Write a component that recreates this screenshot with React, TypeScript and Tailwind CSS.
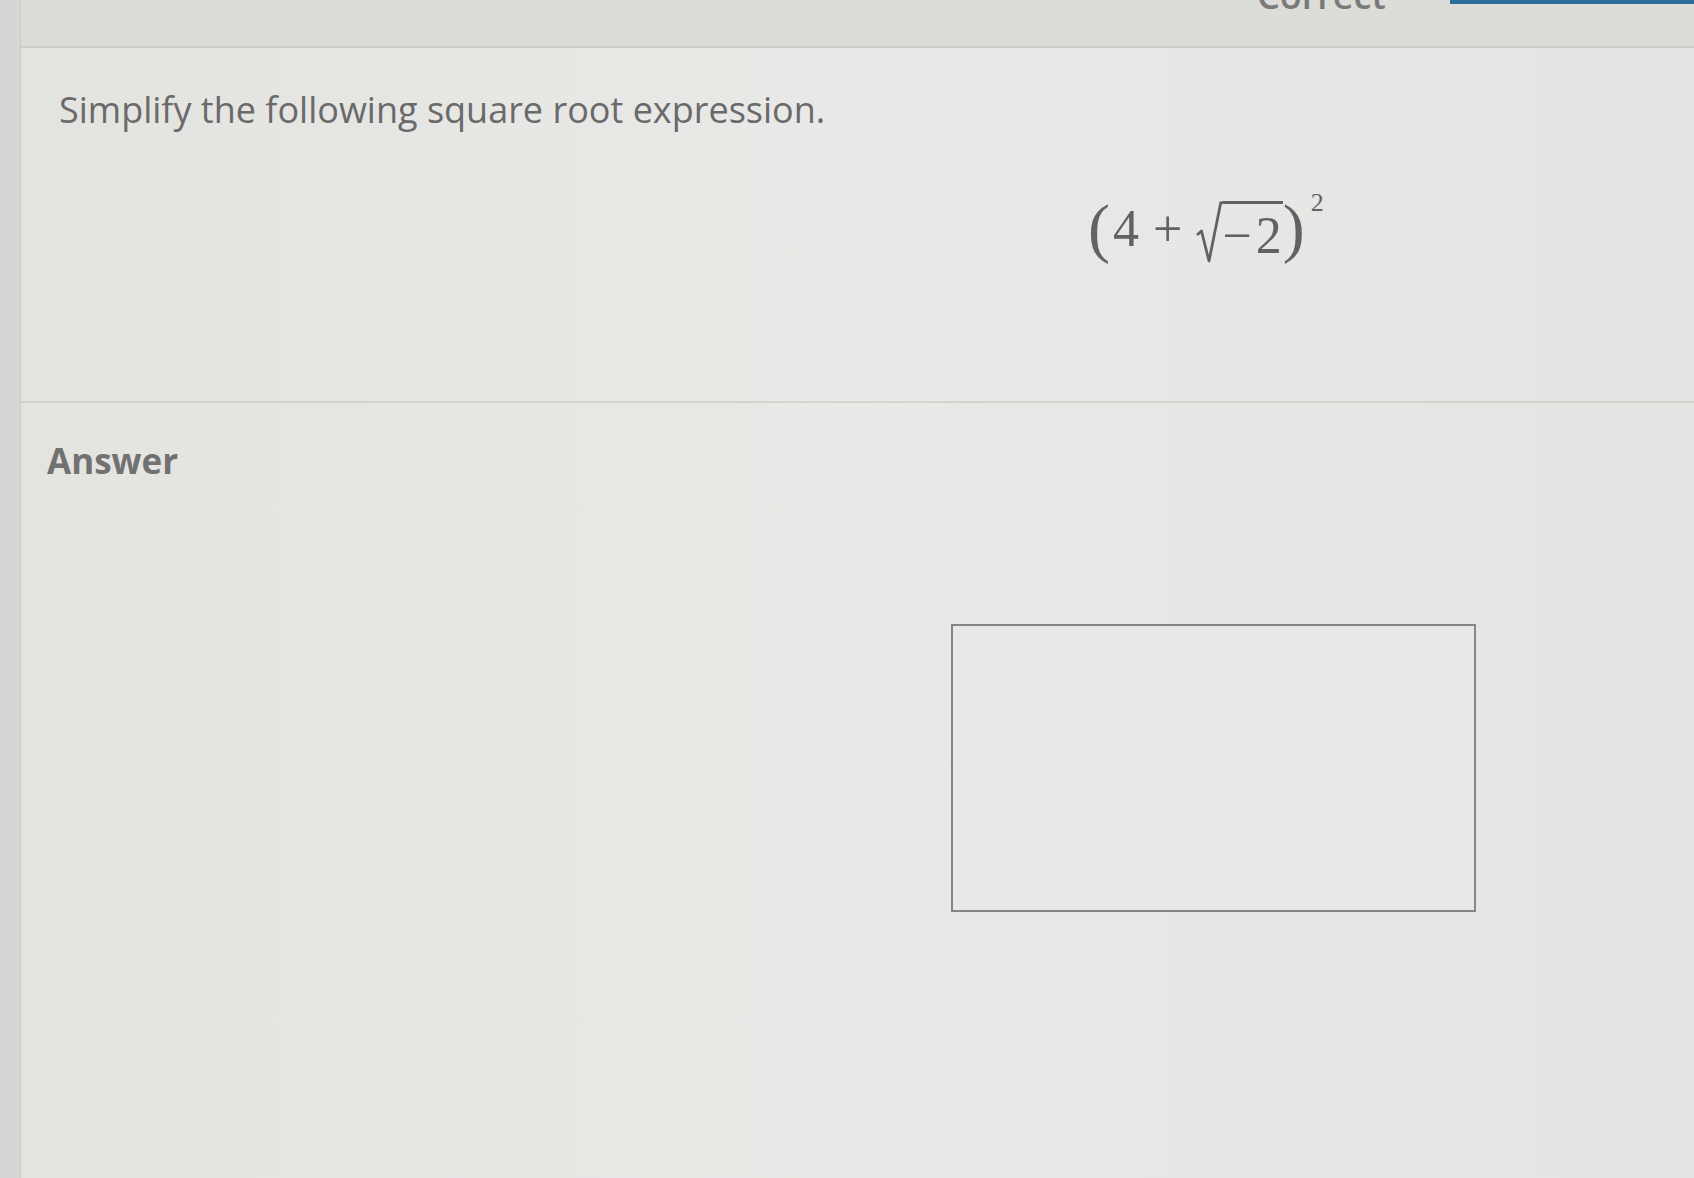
import { type FC } from 'react';

const SANS = { fontFamily: '"Open Sans", "Noto Sans", sans-serif' };
const SERIF = { fontFamily: '"Liberation Serif", "DejaVu Serif", serif' };

// (4 + √−2)²
const Expression: FC = () => (
  <div className="flex items-center text-[#626262] text-[52px] leading-none" style={SERIF}>
    <span className="text-[66px] leading-none -mt-[2px]">(</span>
    <span className="ml-[3px]">4</span>
    <span className="mx-[14px]">+</span>
    <span className="flex items-end">
      <svg width="26" height="64" viewBox="0 0 26 64" className="mt-[6px]">
        <path
          d="M1 35 L5.5 31 L13 61 L25 1.5"
          fill="none"
          stroke="#626262"
          strokeWidth="2.8"
          strokeLinejoin="round"
        />
      </svg>
      <span className="flex items-center border-t-[3px] border-[#626262] pt-[6px] pr-[1px] mb-[2px]">
        <span className="mr-[4px]">−</span>
        <span>2</span>
      </span>
    </span>
    <span className="text-[66px] leading-none -mt-[2px]">)</span>
    <span className="self-start text-[26px] ml-[6px] -mt-[4px]">2</span>
  </div>
);

export default function App() {
  return (
    <div
      className="flex w-full h-[1178px] overflow-hidden bg-gradient-to-r from-[#e3e3e0] via-[#e9e9e7] to-[#e4e4e2]"
      style={SANS}
    >
      <div className="w-[21px] shrink-0 bg-[#d6d6d4] border-r border-[#cacac7]" />

      <div className="flex flex-col flex-1 min-w-0">
        {/* top bar */}
        <div className="flex items-start h-[48px] shrink-0 bg-[#dcdcd9] border-b-2 border-[#cbcbc8] overflow-hidden">
          <span className="ml-[1236px] -mt-[22px] text-[36px] font-semibold text-[#7a7a7a] leading-none">
            Correct
          </span>
          <div className="ml-auto w-[244px] h-[4px] bg-[#2c6e9c]" />
        </div>

        {/* question */}
        <div className="flex flex-col h-[355px] shrink-0 border-b-2 border-[#d2d2cf]">
          <p className="pl-[38px] pt-[44px] text-[36px] leading-none text-[#6a6a6a]">
            Simplify the following square root expression.
          </p>
          <div className="pl-[1067px] pt-[66px]">
            <Expression />
          </div>
        </div>

        {/* answer */}
        <div className="flex flex-col flex-1">
          <p className="pl-[26px] pt-[40px] text-[35px] font-bold leading-none text-[#717171]">Answer</p>
          <div className="ml-[930px] mt-[146px] w-[525px] h-[288px] border-[2.5px] border-[#858585] bg-[#e8e8e6]" />
        </div>
      </div>
    </div>
  );
}
